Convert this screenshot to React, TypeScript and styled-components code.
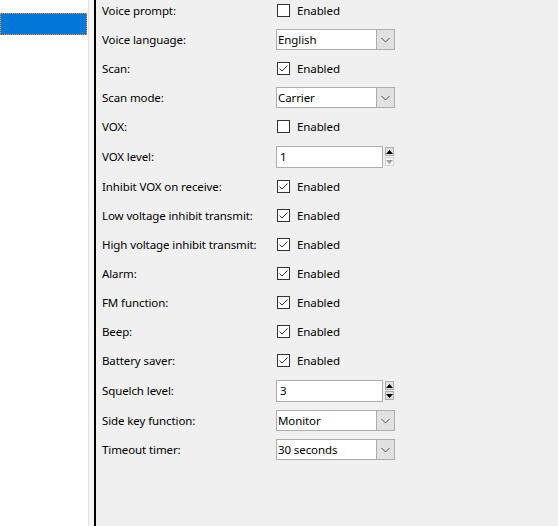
import React from 'react';
import styled, { createGlobalStyle } from 'styled-components';

const GlobalStyle = createGlobalStyle`
  html, body {
    margin: 0;
    padding: 0;
    background: #f0f0f0;
  }
  body {
    font-family: "Segoe UI", "Noto Sans", sans-serif;
    font-size: 11.5px;
    letter-spacing: -0.1px;
    color: #000;
  }
`;

type Field =
  | { label: string; kind: 'check'; checked: boolean }
  | { label: string; kind: 'combo'; value: string }
  | { label: string; kind: 'spin'; value: string; atMin?: boolean };

const fields: Field[] = [
  { label: 'Voice prompt:', kind: 'check', checked: false },
  { label: 'Voice language:', kind: 'combo', value: 'English' },
  { label: 'Scan:', kind: 'check', checked: true },
  { label: 'Scan mode:', kind: 'combo', value: 'Carrier' },
  { label: 'VOX:', kind: 'check', checked: false },
  { label: 'VOX level:', kind: 'spin', value: '1', atMin: true },
  { label: 'Inhibit VOX on receive:', kind: 'check', checked: true },
  { label: 'Low voltage inhibit transmit:', kind: 'check', checked: true },
  { label: 'High voltage inhibit transmit:', kind: 'check', checked: true },
  { label: 'Alarm:', kind: 'check', checked: true },
  { label: 'FM function:', kind: 'check', checked: true },
  { label: 'Beep:', kind: 'check', checked: true },
  { label: 'Battery saver:', kind: 'check', checked: true },
  { label: 'Squelch level:', kind: 'spin', value: '3' },
  { label: 'Side key function:', kind: 'combo', value: 'Monitor' },
  { label: 'Timeout timer:', kind: 'combo', value: '30 seconds' },
];

const App: React.FC = () => {
  return (
    <>
      <GlobalStyle />
      <Window>
        <Sidebar>
          <Blank />
          <SelectedItem />
        </Sidebar>
        <Gutter />
        <Panel>
          <Form>
            {fields.map((f) => (
              <Row key={f.label} $tall={f.kind === 'spin'}>
                <Label>{f.label}</Label>
                {f.kind === 'check' && (
                  <CheckWrap>
                    <Box>
                      {f.checked && (
                        <svg width="11" height="11" viewBox="0 0 11 11">
                          <path d="M1.5 5.5 L4 8 L9.5 2.5" fill="none" stroke="#333" strokeWidth="1" />
                        </svg>
                      )}
                    </Box>
                    <span>Enabled</span>
                  </CheckWrap>
                )}
                {f.kind === 'combo' && (
                  <Combo>
                    <ComboText>{f.value}</ComboText>
                    <ComboButton>
                      <svg width="9" height="6" viewBox="0 0 9 6">
                        <path d="M0.5 1 L4.5 5 L8.5 1" fill="none" stroke="#555" strokeWidth="1" />
                      </svg>
                    </ComboButton>
                  </Combo>
                )}
                {f.kind === 'spin' && (
                  <Spin>
                    <SpinField>{f.value}</SpinField>
                    <SpinButtons>
                      <SpinButton>
                        <svg width="7" height="4" viewBox="0 0 7 4">
                          <path d="M0 4 L3.5 0 L7 4 Z" fill="#000" />
                        </svg>
                      </SpinButton>
                      <SpinButton $disabled={f.atMin}>
                        <svg width="7" height="4" viewBox="0 0 7 4">
                          <path d="M0 0 L7 0 L3.5 4 Z" fill={f.atMin ? '#a0a0a0' : '#000'} />
                        </svg>
                      </SpinButton>
                    </SpinButtons>
                  </Spin>
                )}
              </Row>
            ))}
          </Form>
        </Panel>
      </Window>
    </>
  );
};

export default App;

const Window = styled.div`
  display: flex;
  height: 526px;
  width: 558px;
  overflow: hidden;
`;

const Sidebar = styled.div`
  width: 88px;
  flex: none;
  background: #fff;
  border-right: 1px solid #e3e3e3;
  display: flex;
  flex-direction: column;
`;

const Blank = styled.div`
  height: 13px;
`;

const SelectedItem = styled.div`
  height: 22px;
  width: 87px;
  box-sizing: border-box;
  background: #0078d7;
  border: 1px dotted #ff8c1a;
`;

const Gutter = styled.div`
  width: 5px;
  flex: none;
  background: #f4f4f4;
`;

const Panel = styled.div`
  flex: 1;
  border-left: 2px solid #000;
  padding-left: 6px;
  background: #f0f0f0;
`;

const Form = styled.div`
  margin-top: -4px;
  display: flex;
  flex-direction: column;
`;

const Row = styled.div<{ $tall?: boolean }>`
  display: flex;
  align-items: center;
  height: ${({ $tall }) => ($tall ? 31 : 29)}px;
`;

const Label = styled.div`
  width: 174px;
  flex: none;
  white-space: nowrap;
`;

const CheckWrap = styled.div`
  display: flex;
  align-items: center;
  gap: 7px;
  padding-left: 1px;
`;

const Box = styled.div`
  width: 13px;
  height: 13px;
  box-sizing: border-box;
  border: 1px solid #333;
  background: #fff;
  display: flex;
  align-items: center;
  justify-content: center;
`;

const Combo = styled.div`
  width: 119px;
  height: 21px;
  box-sizing: border-box;
  border: 1px solid #adadad;
  background: #fff;
  display: flex;
`;

const ComboText = styled.div`
  flex: 1;
  padding-left: 1px;
  line-height: 19px;
`;

const ComboButton = styled.div`
  width: 17px;
  background: #e1e1e1;
  border-left: 1px solid #adadad;
  display: flex;
  align-items: center;
  justify-content: center;
`;

const Spin = styled.div`
  display: flex;
  align-items: center;
  gap: 2px;
`;

const SpinField = styled.div`
  width: 107px;
  height: 22px;
  box-sizing: border-box;
  border: 1px solid #adadad;
  background: #fff;
  padding-left: 3px;
  line-height: 20px;
`;

const SpinButtons = styled.div`
  display: flex;
  flex-direction: column;
  gap: 1px;
`;

const SpinButton = styled.div<{ $disabled?: boolean }>`
  width: 9px;
  height: 9px;
  box-sizing: border-box;
  border: 1px solid ${({ $disabled }) => ($disabled ? '#d6d6d6' : '#adadad')};
  background: ${({ $disabled }) => ($disabled ? '#f4f4f4' : '#e1e1e1')};
  display: flex;
  align-items: center;
  justify-content: center;
`;
